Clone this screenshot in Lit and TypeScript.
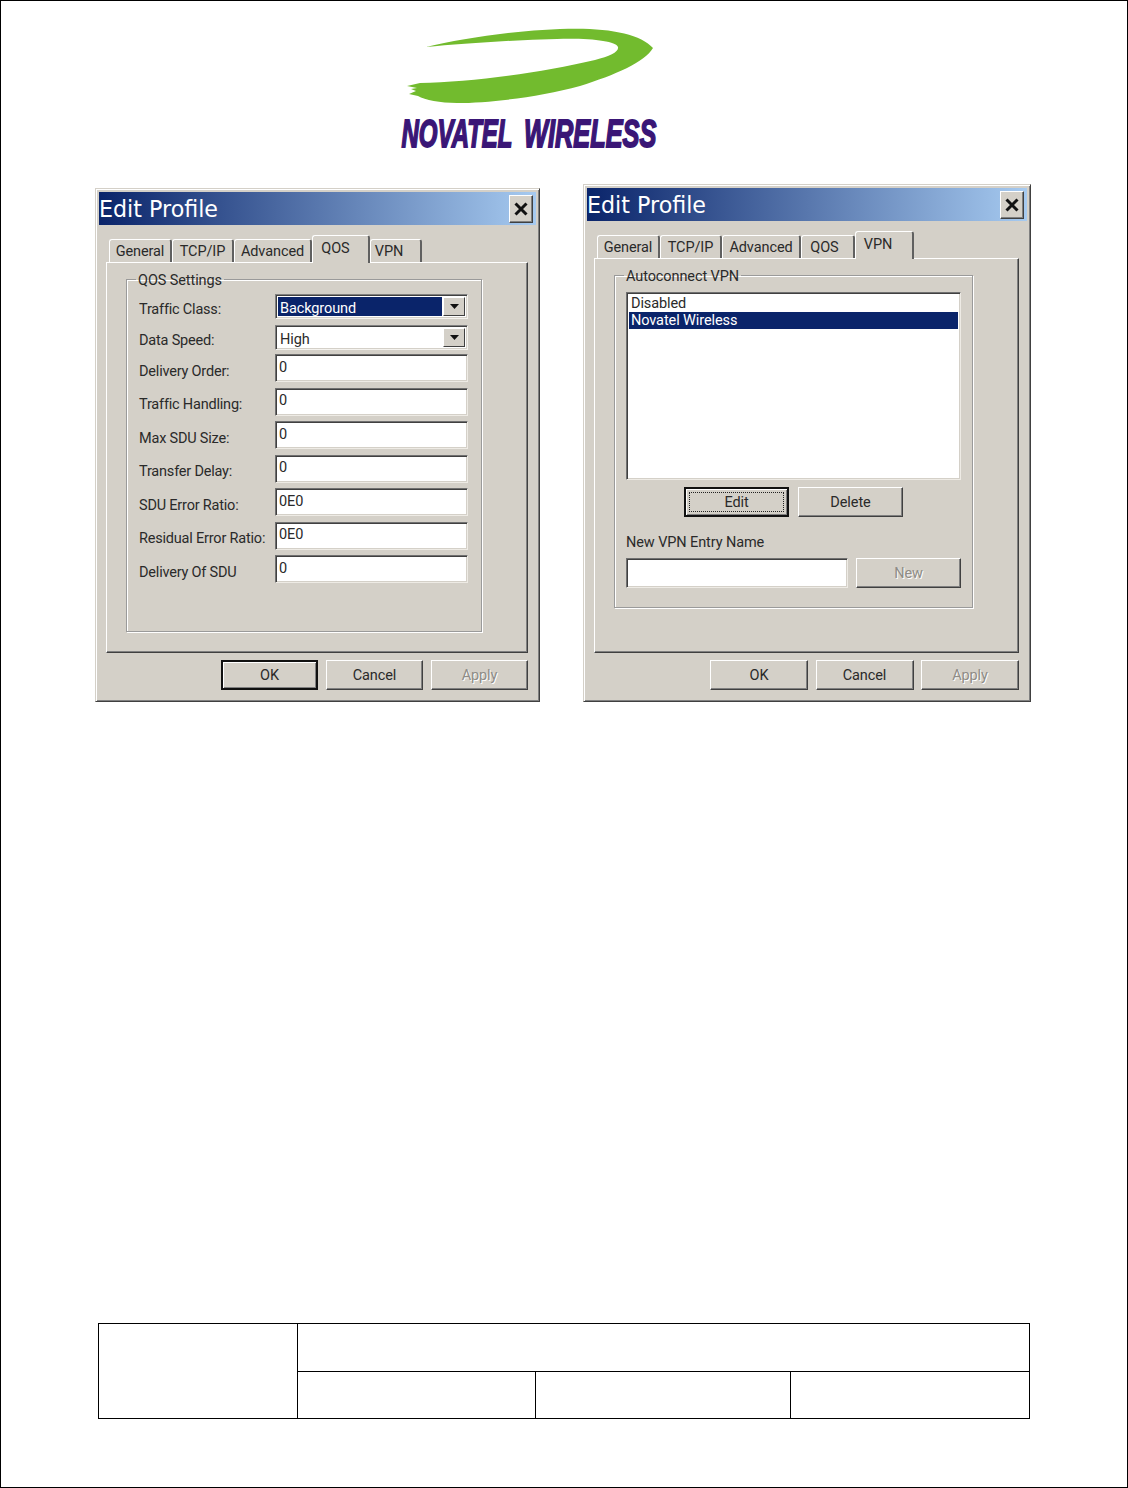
import { LitElement, html, css } from "lit";
import { customElement } from "lit/decorators.js";

const arrow = html`<svg class="arrow" width="9" height="5" viewBox="0 0 9 5"><path d="M0 0H9L4.5 5Z" fill="#111"/></svg>`;
const closeX = html`<svg width="14" height="14" viewBox="0 0 14 14"><path d="M1.5 1.5L12.5 12.5M12.5 1.5L1.5 12.5" stroke="#111" stroke-width="3"/></svg>`;

const qosFields = [
  ["Delivery Order:", "0"],
  ["Traffic Handling:", "0"],
  ["Max SDU Size:", "0"],
  ["Transfer Delay:", "0"],
  ["SDU Error Ratio:", "0E0"],
  ["Residual Error Ratio:", "0E0"],
  ["Delivery Of SDU", "0"],
];

type Tab = [string, number, boolean, number];
const tabsA: Tab[] = [["General", 63, false, 0], ["TCP/IP", 62, false, 0], ["Advanced", 78, false, 0], ["QOS", 58, true, 10], ["VPN", 52, false, 13]];
const tabsB: Tab[] = [["General", 63, false, 0], ["TCP/IP", 62, false, 0], ["Advanced", 79, false, 0], ["QOS", 54, false, 6], ["VPN", 59, true, 12]];

@customElement("app-root")
export class AppRoot extends LitElement {
  static styles = css`
    :host { display: block; }
    .page { box-sizing: border-box; width: 1128px; height: 1488px; border: 1px solid #000; background: #fff; display: flex; flex-direction: column; padding: 14px 0 68px; font-family: Roboto, "Liberation Sans", Arial, sans-serif; font-size: 14.5px; letter-spacing: -0.1px; color: #2a2a2a; }
    .logo { display: block; margin-left: 389px; flex: none; }
    .logo-text { font-family: "Liberation Sans", sans-serif; font-size: 39px; font-weight: 700; font-style: italic; letter-spacing: 0; fill: #3a1676; stroke: #3a1676; stroke-width: 1.8; }
    .dialogs { display: flex; align-items: flex-end; gap: 43px; margin: 24px 0 0 94px; }
    .dialog { box-sizing: border-box; padding: 3px 3px 12px; background: #d4d0c8; border: 1px solid; border-color: #d4d0c8 #404040 #404040 #d4d0c8; box-shadow: inset 1px 1px #fff, inset -1px -1px #808080; }
    .dialog.a { width: 445px; height: 514px; }
    .dialog.b { width: 448px; height: 518px; }
    .title { height: 33px; display: flex; align-items: center; justify-content: space-between; padding: 0 3px 0 0; background: linear-gradient(90deg, #0a246a, #a6caf0); font-family: "DejaVu Sans", sans-serif; font-size: 22.2px; letter-spacing: 0; color: #fff; }
    .close { box-sizing: border-box; width: 24px; height: 28px; display: flex; align-items: center; justify-content: center; background: #d4d0c8; border: 1px solid; border-color: #fff #404040 #404040 #fff; box-shadow: inset -1px -1px #808080; }
    .body { padding: 10px 8px 0 7px; }
    .tabs { display: flex; align-items: flex-end; height: 27px; padding-left: 3px; }
    .tab { box-sizing: border-box; height: 23px; display: flex; align-items: center; justify-content: center; background: #d4d0c8; border-top: 1px solid #fff; border-left: 1px solid #fff; border-right: 2px solid #606060; border-radius: 3px 3px 0 0; }
    .tab.active { position: relative; height: 28px; margin-bottom: -1px; padding-bottom: 2px; z-index: 1; }
    .panel { box-sizing: border-box; background: #d4d0c8; border: 1px solid; border-color: #fff #404040 #404040 #fff; box-shadow: inset -1px -1px #808080; padding: 7px 0 0 19px; }
    .dialog.a .panel { height: 391px; }
    .dialog.b .panel { height: 395px; }
    fieldset { box-sizing: border-box; margin: 0; background: #d4d0c8; border: 1px solid #9a9a9a; box-shadow: 1px 1px #fff, inset 1px 1px #fff; min-width: 0; }
    legend { margin-left: -3px; padding: 0 2px; height: 18px; line-height: 22px; }
    .dialog.a fieldset { width: 356px; height: 362px; padding: 6px 0 0 12px; }
    .dialog.b fieldset { width: 359px; height: 342px; padding: 8px 0 0 11px; }
    .dialog.b legend { margin-left: -2px; }
    .grid { display: grid; grid-template-columns: 136px 193px; align-items: center; }
    .label { line-height: 14px; padding-top: 7px; white-space: nowrap; letter-spacing: -0.2px; }
    .combo-row { margin-bottom: 6px; }
    .combo-row.last { margin-bottom: 4px; }
    .combo { box-sizing: border-box; height: 25px; display: flex; gap: 1px; padding: 2px; background: #fff; border: 1px solid; border-color: #808080 #f4f2ee #f4f2ee #808080; box-shadow: inset 1px 1px #404040, inset -1px -1px #d4d0c8; }
    .combo-text { flex: 1; display: flex; align-items: center; padding: 3px 0 0 2px; }
    .combo-text.sel { background: #0a246a; color: #fff; }
    .combo-btn { box-sizing: border-box; width: 22px; display: flex; align-items: center; justify-content: center; background: #d4d0c8; border: 1px solid; border-color: #fff #404040 #404040 #fff; }
    .field { box-sizing: border-box; height: 28px; padding: 0 0 2px 3px; display: flex; align-items: center; background: #fff; border: 1px solid; border-color: #707070 #eeebe5 #eeebe5 #707070; box-shadow: inset 1px 1px #404040, inset -1px -1px #d4d0c8; }
    .fields { row-gap: 5.5px; }
    .btn { box-sizing: border-box; height: 30px; display: flex; align-items: center; justify-content: center; background: #d4d0c8; border: 1px solid; border-color: #fff #404040 #404040 #fff; box-shadow: inset -1px -1px #808080; }
    .btn.wide { width: 105px; }
    .btn.std { width: 97px; }
    .dialog.b .btn.std { width: 98px; }
    .btn.default { border: 2px solid #111; box-shadow: inset 1px 1px #fff, inset -1px -1px #808080; }
    .btn.off { color: #8f8c86; text-shadow: 1px 1px #fff; }
    .focus { box-sizing: border-box; width: calc(100% - 6px); height: calc(100% - 6px); display: flex; align-items: center; justify-content: center; border: 1px dotted #222; }
    .foot { display: flex; justify-content: flex-end; gap: 8px; margin-top: 7px; }
    .dialog.b .foot { gap: 7.5px; }
    .list { box-sizing: border-box; width: 335px; height: 188px; padding: 2px; background: #fff; border: 1px solid; border-color: #707070 #eeebe5 #eeebe5 #707070; box-shadow: inset 1px 1px #404040, inset -1px -1px #d4d0c8; }
    .item { height: 17px; line-height: 17px; padding-left: 2px; }
    .item.sel { background: #0a246a; color: #fff; }
    .list-actions { display: flex; gap: 9px; margin: 7px 0 0 58px; }
    .new-label { margin-top: 17px; line-height: 18px; }
    .new-row { display: flex; gap: 8px; margin-top: 6px; }
    .new-row .field { width: 222px; height: 30px; }
    .new-row .btn { width: 105px; }
    .sheet { box-sizing: border-box; margin: auto 0 0 97px; width: 932px; height: 96px; border: 1px solid #000; display: grid; grid-template-columns: 198px 238px 255px 1fr; grid-template-rows: 47px 47px; }
    .cell { box-sizing: border-box; border-left: 1px solid #000; }
    .cell.first { grid-row: 1 / 3; border-left: 0; }
    .cell.span { grid-column: 2 / 5; }
    .cell.low { border-top: 1px solid #000; }
  `;

  tabs(list: Tab[]) {
    return html`<div class="tabs">${list.map(([t, w, on, shift]) => html`<div class="tab ${on ? "active" : ""}" style="width:${w}px;padding-right:${shift}px">${t}</div>`)}</div>`;
  }

  titlebar() {
    return html`<div class="title"><span>Edit Profile</span><span class="close">${closeX}</span></div>`;
  }

  foot(isDefault: boolean) {
    return html`<div class="foot">
      <div class="btn std ${isDefault ? "default" : ""}">OK</div>
      <div class="btn std">Cancel</div>
      <div class="btn std off">Apply</div>
    </div>`;
  }

  render() {
    return html`<div class="page">
      <svg class="logo" width="280" height="145" viewBox="0 0 280 145" role="img" aria-label="Novatel Wireless">
        <path d="M36 32C70 24 120 16 170 14C215 12 250 18 263 33C255 47 225 60 190 71C150 82 100 88 67 88C50 88 35 85 28 81L19 79L26 76L21 74L27 73L17 71L30 68C80 67 150 58 205 45C220 41 229 37 228 32C226 26 200 23 167 24C120 25 70 29 36 32Z" fill="#72bb2e"/>
        <text class="logo-text" transform="translate(11.5 131.5) scale(0.615 1)">NOVATEL</text>
        <text class="logo-text" transform="translate(134 131.5) scale(0.65 1)">WIRELESS</text>
      </svg>
      <div class="dialogs">
        <div class="dialog a">
          ${this.titlebar()}
          <div class="body">
            ${this.tabs(tabsA)}
            <div class="panel">
              <fieldset>
                <legend>QOS Settings</legend>
                <div class="grid combo-row">
                  <div class="label">Traffic Class:</div>
                  <div class="combo"><div class="combo-text sel">Background</div><div class="combo-btn">${arrow}</div></div>
                </div>
                <div class="grid combo-row last">
                  <div class="label">Data Speed:</div>
                  <div class="combo"><div class="combo-text">High</div><div class="combo-btn">${arrow}</div></div>
                </div>
                <div class="grid fields">
                  ${qosFields.map(([l, v]) => html`<div class="label">${l}</div><div class="field">${v}</div>`)}
                </div>
              </fieldset>
            </div>
            ${this.foot(true)}
          </div>
        </div>
        <div class="dialog b">
          ${this.titlebar()}
          <div class="body">
            ${this.tabs(tabsB)}
            <div class="panel">
              <fieldset>
                <legend>Autoconnect VPN</legend>
                <div class="list">
                  <div class="item">Disabled</div>
                  <div class="item sel">Novatel Wireless</div>
                </div>
                <div class="list-actions">
                  <div class="btn wide default"><div class="focus">Edit</div></div>
                  <div class="btn wide">Delete</div>
                </div>
                <div class="new-label">New VPN Entry Name</div>
                <div class="new-row">
                  <div class="field"></div>
                  <div class="btn off">New</div>
                </div>
              </fieldset>
            </div>
            ${this.foot(false)}
          </div>
        </div>
      </div>
      <div class="sheet">
        <div class="cell first"></div>
        <div class="cell span"></div>
        <div class="cell low"></div>
        <div class="cell low"></div>
        <div class="cell low"></div>
      </div>
    </div>`;
  }
}
